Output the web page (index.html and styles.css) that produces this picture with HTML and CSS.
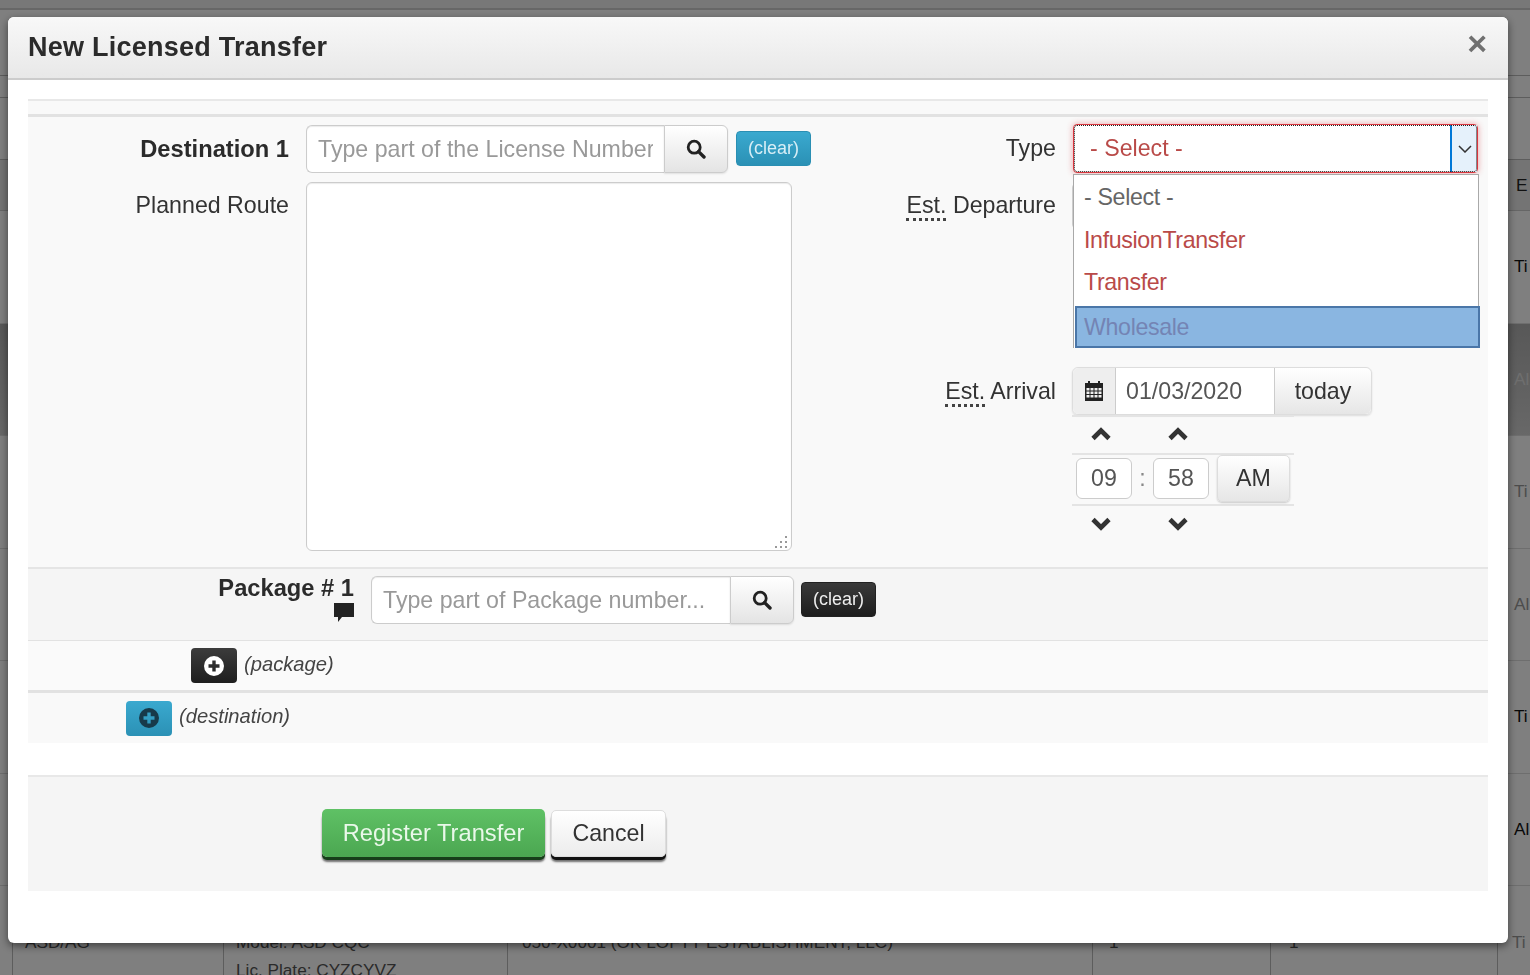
FILE: index.html
```html
<!DOCTYPE html>
<html lang="en">
<head>
<meta charset="utf-8">
<title>New Licensed Transfer</title>
<link rel="stylesheet" href="styles.css">
</head>
<body>
<svg class="defs" width="0" height="0" aria-hidden="true">
  <defs>
    <symbol id="i-search" viewBox="0 0 20 20"><circle cx="8.2" cy="8.2" r="6" fill="none" stroke="currentColor" stroke-width="2.8"/><path d="M12.6 12.6 18 18" stroke="currentColor" stroke-width="3.4" stroke-linecap="round"/></symbol>
    <symbol id="i-up" viewBox="0 0 20 14"><path d="M2 11.500 10 3.500 18 11.500" fill="none" stroke="currentColor" stroke-width="4.600"/></symbol>
    <symbol id="i-down" viewBox="0 0 20 14"><path d="M2 2.500 10 10.500 18 2.500" fill="none" stroke="currentColor" stroke-width="4.600"/></symbol>
    <symbol id="i-plus" viewBox="0 0 20 20"><path fill-rule="evenodd" d="M10 0a10 10 0 1 0 0 20 10 10 0 0 0 0-20zM8.300 4.500h3.400v3.800h3.800v3.400h-3.800v3.800H8.300v-3.800H4.500V8.300h3.800z"/></symbol>
  </defs>
</svg>

<div class="page">
  <div class="bg-top"></div>
  <div class="bg-band bg-band-a"></div>
  <div class="bg-band bg-band-b"></div>
  <div class="bg-band bg-band-c"></div>
  <div class="bg-row bg-head"><span class="bg-edge bg-bold">E</span></div>
  <div class="bg-row"><span class="bg-edge bg-dark">Ti</span></div>
  <div class="bg-row bg-selected"><span class="bg-edge bg-pale">Al</span></div>
  <div class="bg-row"><span class="bg-edge bg-faint">Ti</span></div>
  <div class="bg-row"><span class="bg-edge bg-faint">Al</span></div>
  <div class="bg-row"><span class="bg-edge bg-dark">Ti</span></div>
  <div class="bg-row"><span class="bg-edge bg-dark">Al</span></div>
  <div class="bg-row bg-last">
    <span class="bg-cell bg-c1">ASD/AG</span>
    <span class="bg-cell bg-c2">Model: ASD CQC<br>Lic. Plate: CYZCYVZ</span>
    <span class="bg-cell bg-c3">050-X0001 (OK LOFTY ESTABLISHMENT, LLC)</span>
    <span class="bg-cell bg-c4">1</span>
    <span class="bg-cell bg-c5">1</span>
    <span class="bg-cell bg-c6 bg-faint">Ti</span>
  </div>
</div>
<div class="backdrop"></div>

<div class="modal">
  <header class="modal-header">
    <h1 class="modal-title">New Licensed Transfer</h1>
    <span class="modal-close">×</span>
  </header>
  <div class="modal-body">
    <div class="lead-gap"></div>
    <section class="main-section">
      <div class="col-left">
        <div class="form-row">
          <label class="label label-left label-bold">Destination 1</label>
          <div class="input-group dest-group">
            <input class="text-input" type="text" placeholder="Type part of the License Number">
            <button class="search-btn" type="button"><svg class="icon-search"><use href="#i-search"/></svg></button>
          </div>
          <button class="clear-btn clear-blue" type="button">(clear)</button>
        </div>
        <div class="form-row form-row-route">
          <label class="label label-left label-route">Planned Route</label>
          <div class="route-wrap">
            <textarea class="route-area"></textarea>
            <svg class="route-grip" width="14" height="13" viewBox="0 0 14 13"><path fill="#999" d="M10 0h2v2h-2zM5 5h2v2H5zM10 5h2v2h-2zM0 10h2v2H0zM5 10h2v2H5zM10 10h2v2h-2z"/></svg>
          </div>
        </div>
      </div>
      <div class="col-right">
        <div class="form-row type-row">
          <label class="label label-right">Type</label>
          <div class="select-wrap">
            <div class="select-box">
              <span class="select-value">- Select -</span>
              <span class="select-arrow"><svg width="14" height="8" viewBox="0 0 14 8"><path d="M1 1l6 6 6-6" fill="none" stroke="#333" stroke-width="1.500"/></svg></span>
            </div>
            <ul class="select-list">
              <li class="opt opt-muted">- Select -</li>
              <li class="opt">InfusionTransfer</li>
              <li class="opt">Transfer</li>
              <li class="opt opt-active">Wholesale</li>
            </ul>
          </div>
        </div>
        <div class="form-row departure-row">
          <label class="label label-right label-dep"><abbr class="abbr">Est.</abbr> Departure</label>
          <div class="departure-stub"></div>
        </div>
        <div class="form-row arrival-row">
          <label class="label label-right label-arr"><abbr class="abbr">Est.</abbr> Arrival</label>
          <div class="picker">
            <div class="date-group">
              <span class="date-addon">
                <svg width="18" height="20" viewBox="0 0 18 20"><path fill="#222" d="M3 0h2v3H3zM13 0h2v3h-2zM0 2h18v18H0z"/><path fill="#f0f0f0" d="M1.500 7h3v2.500h-3zM5.500 7h3v2.500h-3zM9.500 7h3v2.500h-3zM13.500 7h3v2.500h-3zM1.500 10.500h3V13h-3zM5.500 10.500h3V13h-3zM9.500 10.500h3V13h-3zM13.500 10.500h3V13h-3zM1.500 14h3v2.500h-3zM5.500 14h3v2.500h-3zM9.500 14h3v2.500h-3zM13.500 14h3v2.500h-3z"/></svg>
              </span>
              <input class="date-input" type="text" value="01/03/2020">
              <button class="today-btn" type="button">today</button>
            </div>
            <div class="time-grid">
              <span class="chev"><svg class="icon-chev"><use href="#i-up"/></svg></span>
              <span></span>
              <span class="chev"><svg class="icon-chev"><use href="#i-up"/></svg></span>
              <span></span>
              <span></span>
              <input class="time-input" type="text" value="09">
              <span class="time-sep">:</span>
              <input class="time-input" type="text" value="58">
              <span></span>
              <button class="ampm-btn" type="button">AM</button>
              <span class="chev chev-down"><svg class="icon-chev"><use href="#i-down"/></svg></span>
              <span></span>
              <span class="chev chev-down"><svg class="icon-chev"><use href="#i-down"/></svg></span>
              <span></span>
              <span></span>
            </div>
          </div>
        </div>
      </div>
    </section>

    <section class="package-section">
      <div class="package-label">
        <span class="label-bold">Package # 1</span>
        <svg class="icon-comment" width="20" height="19" viewBox="0 0 20 19"><path fill="#222" d="M0 0h20v14H8l-4 5v-5H0z"/></svg>
      </div>
      <div class="input-group package-group">
        <input class="text-input" type="text" placeholder="Type part of Package number...">
        <button class="search-btn" type="button"><svg class="icon-search"><use href="#i-search"/></svg></button>
      </div>
      <button class="clear-btn clear-dark" type="button">(clear)</button>
    </section>

    <section class="add-row add-package">
      <button class="add-btn add-dark" type="button"><svg class="icon-plus"><use href="#i-plus"/></svg></button>
      <em class="add-text">(package)</em>
    </section>
    <section class="add-row add-destination">
      <button class="add-btn add-blue" type="button"><svg class="icon-plus"><use href="#i-plus"/></svg></button>
      <em class="add-text add-text-up">(destination)</em>
    </section>

    <section class="footer-section">
      <button class="btn-register" type="button">Register Transfer</button>
      <button class="btn-cancel" type="button">Cancel</button>
    </section>
  </div>
</div>
</body>
</html>
```
FILE: styles.css
```css
* { box-sizing: border-box; }
html, body { margin: 0; padding: 0; height: 100%; overflow: hidden; }
body { font-family: "Liberation Sans", Arial, sans-serif; color: #333; background: #fff; }
.defs { position: absolute; }

/* page behind the dialog */
.page { height: 975px; overflow: hidden; font-size: 17.2px; color: #222; }
.bg-top { height: 10px; background: #f0f0f0; border-bottom: 2px solid #cfcfcf; }
.bg-band { border-bottom: 1px solid #bbb; }
.bg-band-a { height: 66px; }
.bg-band-b { height: 22px; }
.bg-band-c { height: 62px; }
.bg-row { height: 112.5px; border-bottom: 1px solid #ddd; display: flex; align-items: center; padding-left: 1514px; white-space: nowrap; }
.bg-head { height: 51px; background: #e8e8e8; border-bottom: 1px solid #ccc; padding-left: 1516px; }
.bg-selected { background: linear-gradient(#b0b0b0, #d0d0d0); }
.bg-dark { color: #111; }
.bg-pale { color: #ddd; }
.bg-faint { color: #999; }
.bg-last { height: 100px; padding-left: 12px; align-items: flex-start; border: 0; color: #555; }
.bg-cell { display: block; height: 100%; padding-top: 42px; line-height: 28px; border-left: 1px solid #bbb; }
.bg-c1 { width: 211px; padding-left: 12px; }
.bg-c2 { width: 284px; padding-left: 12px; }
.bg-c3 { width: 585px; padding-left: 14px; }
.bg-c4 { width: 178px; padding-left: 16px; }
.bg-c5 { width: 227px; padding-left: 18px; }
.bg-c6 { padding-left: 14px; }
.backdrop { position: fixed; inset: 0; background: rgba(0, 0, 0, .5); }

/* dialog */
.modal { position: fixed; left: 8px; top: 17px; width: 1500px; height: 926px; background: #fff; border-radius: 6px; box-shadow: 0 3px 9px rgba(0, 0, 0, .5); overflow: hidden; font-size: 23.2px; }
.modal-header { height: 63px; display: flex; align-items: center; justify-content: space-between; padding: 0 20px; background: linear-gradient(#f8f8f8, #e8e8e8); border-bottom: 2px solid #ccc; }
.modal-title { margin: 0; font-size: 27px; font-weight: 700; color: #2b2b2b; letter-spacing: .25px; }
.modal-close { font-size: 34px; font-weight: 700; color: #707070; line-height: 1; margin: -10px 1px 0 0; }
.modal-body { padding: 19px 20px 0; }
.lead-gap { height: 18px; background: #f9f9f9; border-top: 2px solid #e8e8e8; border-bottom: 3px solid #e2e2e2; }

.main-section { height: 450px; display: flex; background: #f9f9f9; padding-top: 7px; }
.col-left { width: 788px; flex: none; padding-top: 1px; }
.col-right { flex: 1; }
.form-row { display: flex; }
.label { display: block; flex: none; text-align: right; color: #333; line-height: 48px; white-space: nowrap; }
.label-bold { font-weight: 700; color: #2b2b2b; font-size: 23.7px; }
.label-left { width: 261px; margin-right: 17px; }
.form-row-route { margin-top: 9px; }
.label-route { line-height: 46px; }

.input-group { display: flex; flex: none; height: 48px; }
.dest-group { width: 422px; }
.package-group { width: 423px; }
.text-input { flex: 1; min-width: 0; height: 48px; border: 1px solid #ccc; border-right: 0; border-radius: 6px 0 0 6px; padding: 0 11px; font: inherit; color: #555; background: #fff; box-shadow: inset 0 1px 1px rgba(0, 0, 0, .08); outline: 0; }
.text-input::placeholder { color: #999; opacity: 1; }
.search-btn { flex: none; width: 64px; height: 48px; padding: 0; display: flex; align-items: center; justify-content: center; border: 1px solid #ccc; border-radius: 0 6px 6px 0; background: linear-gradient(#fff, #e4e4e4); box-shadow: 0 1px 2px rgba(0, 0, 0, .1); color: #222; }
.icon-search { width: 20px; height: 20px; }
.clear-btn { flex: none; height: 35px; width: 75px; margin: 6px 0 0 8px; padding: 0; border: 1px solid transparent; border-radius: 4px; font: 18px "Liberation Sans", Arial, sans-serif; color: #fff; }
.clear-blue { background: linear-gradient(#3aa9cf, #2b91b5); border-color: #2a8fb3; color: #d8eef6; }
.clear-dark { margin-left: 7px; background: linear-gradient(#3a3a3a, #1e1e1e); border-color: #222; color: #eee; }
.route-wrap { position: relative; width: 486px; height: 369px; }
.route-area { display: block; width: 100%; height: 100%; border: 1px solid #ccc; border-radius: 6px; background: #fff; box-shadow: inset 0 1px 1px rgba(0, 0, 0, .08); outline: 0; resize: none; }
.route-grip { position: absolute; right: 3px; bottom: 2px; }

.type-row { height: 58px; }
.label-right { width: 240px; margin-right: 16px; }
.select-wrap { position: relative; width: 405px; height: 49px; margin-left: 1px; }
.select-box { height: 49px; display: flex; align-items: center; justify-content: space-between; background: #fff; border: 1px solid #d9363e; outline: 1px dotted #222; outline-offset: -2px; border-radius: 4px; box-shadow: 0 0 6px rgba(217, 54, 62, .45); color: #b94a48; padding-left: 16px; }
.select-arrow { width: 27px; height: 47px; display: flex; align-items: center; justify-content: center; background: #e5f1fb; border-left: 2px solid #0078d7; }
.select-list { position: absolute; z-index: 2; left: 0; top: 50px; width: 406px; margin: 0; padding: 0; list-style: none; background: #fff; border: 1px solid #a9a9a9; border-bottom: 0; }
.opt { height: 42.5px; padding-left: 10px; color: #b94a48; letter-spacing: -.35px; line-height: 45px; }
.opt-muted { color: #666; }
.opt-active { width: 405px; margin: 3px 0 0 1px; height: 42px; padding-left: 7px; background: #8ab6e1; border: 2px solid #4a76a8; color: #7484b4; line-height: 38px; }

.departure-row { height: 185px; }
.departure-stub { width: 300px; height: 48px; border: 1px solid #ccc; border-radius: 6px; background: #eee; }
.arrival-row { align-items: flex-start; }
.picker { width: 300px; }
.date-group { height: 48px; display: flex; border: 1px solid #ddd; border-radius: 6px; box-shadow: 0 1px 2px rgba(0, 0, 0, .12); }
.date-addon { width: 43px; display: flex; align-items: center; justify-content: center; background: #eee; border-right: 1px solid #ccc; border-radius: 6px 0 0 6px; }
.date-input { width: 158px; border: 0; padding: 0 10px; font: inherit; color: #555; background: #fff; outline: 0; }
.today-btn { flex: 1; padding: 0; border: 0; border-left: 1px solid #ccc; border-radius: 0 6px 6px 0; background: linear-gradient(#fff, #e6e6e6); font: inherit; color: #333; }
.time-grid { width: 222px; display: grid; grid-template-columns: 56px 21px 56px 8px 73px; grid-template-rows: 38px 51px 40px; align-items: center; padding: 0 4px; background: linear-gradient(#e4e4e4, #e4e4e4) 0 0/222px 2px no-repeat, linear-gradient(#e4e4e4, #e4e4e4) 0 38px/222px 2px no-repeat, linear-gradient(#e4e4e4, #e4e4e4) 0 89px/222px 2px no-repeat; }
.chev { display: flex; justify-content: center; padding-right: 6px; color: #333; }
.icon-chev { width: 20px; height: 14px; }
.time-input { width: 56px; height: 41px; border: 1px solid #ccc; border-radius: 6px; padding: 0; text-align: center; font: inherit; color: #555; background: #fff; outline: 0; }
.time-sep { text-align: center; color: #888; }
.ampm-btn { width: 73px; height: 47px; padding: 0; border: 1px solid #ddd; border-radius: 5px; background: linear-gradient(#fff, #e6e6e6); box-shadow: 0 1px 2px rgba(0, 0, 0, .2); font: inherit; color: #333; }

.package-section { height: 73px; display: flex; background: #f5f5f5; border-top: 2px solid #e5e5e5; padding-top: 7px; }
.package-label { width: 326px; margin-right: 17px; display: flex; flex-direction: column; align-items: flex-end; line-height: 24px; }
.icon-comment { margin-top: 3px; }
.add-row { display: flex; align-items: center; }
.add-package { height: 50px; background: #fafafa; border-top: 1px solid #e2e2e2; padding-left: 163px; }
.add-destination { height: 53px; background: #f9f9f9; border-top: 3px solid #e2e2e2; padding-left: 98px; }
.add-btn { width: 46px; height: 35px; padding: 0; display: flex; align-items: center; justify-content: center; border: 0; border-radius: 4px; }
.add-dark { background: linear-gradient(#3c3c3c, #1e1e1e); fill: #fff; }
.add-blue { background: linear-gradient(#3aa9cf, #2b91b5); fill: #173a4a; }
.icon-plus { width: 20px; height: 20px; }
.add-text { margin: -2px 0 0 7px; font-size: 20.2px; color: #444; }
.add-text-up { margin-top: -4px; }

.footer-section { height: 116px; margin-top: 32px; display: flex; align-items: flex-start; padding: 32px 0 0 294px; background: #f5f5f5; border-top: 2px solid #e8e8e8; }
.btn-register { width: 223px; height: 48px; padding: 0; border: 0; border-radius: 5px; background: linear-gradient(#5fc165, #4ba751); box-shadow: 0 3px 0 #173f1a, 0 5px 2px rgba(0, 0, 0, .55); font: 23.7px "Liberation Sans", Arial, sans-serif; color: #e9f8e9; }
.btn-cancel { width: 115px; height: 47px; margin: 1px 0 0 6px; padding: 0; border: 1px solid #ddd; border-radius: 5px; background: linear-gradient(#fff, #ececec); box-shadow: 0 3px 0 #111, 0 5px 2px rgba(0, 0, 0, .55); font: inherit; color: #333; }
.abbr { border-bottom: 3px dotted #444; text-decoration: none; }
.label-dep { line-height: 46px; }
.label-arr { line-height: 48px; }
```
